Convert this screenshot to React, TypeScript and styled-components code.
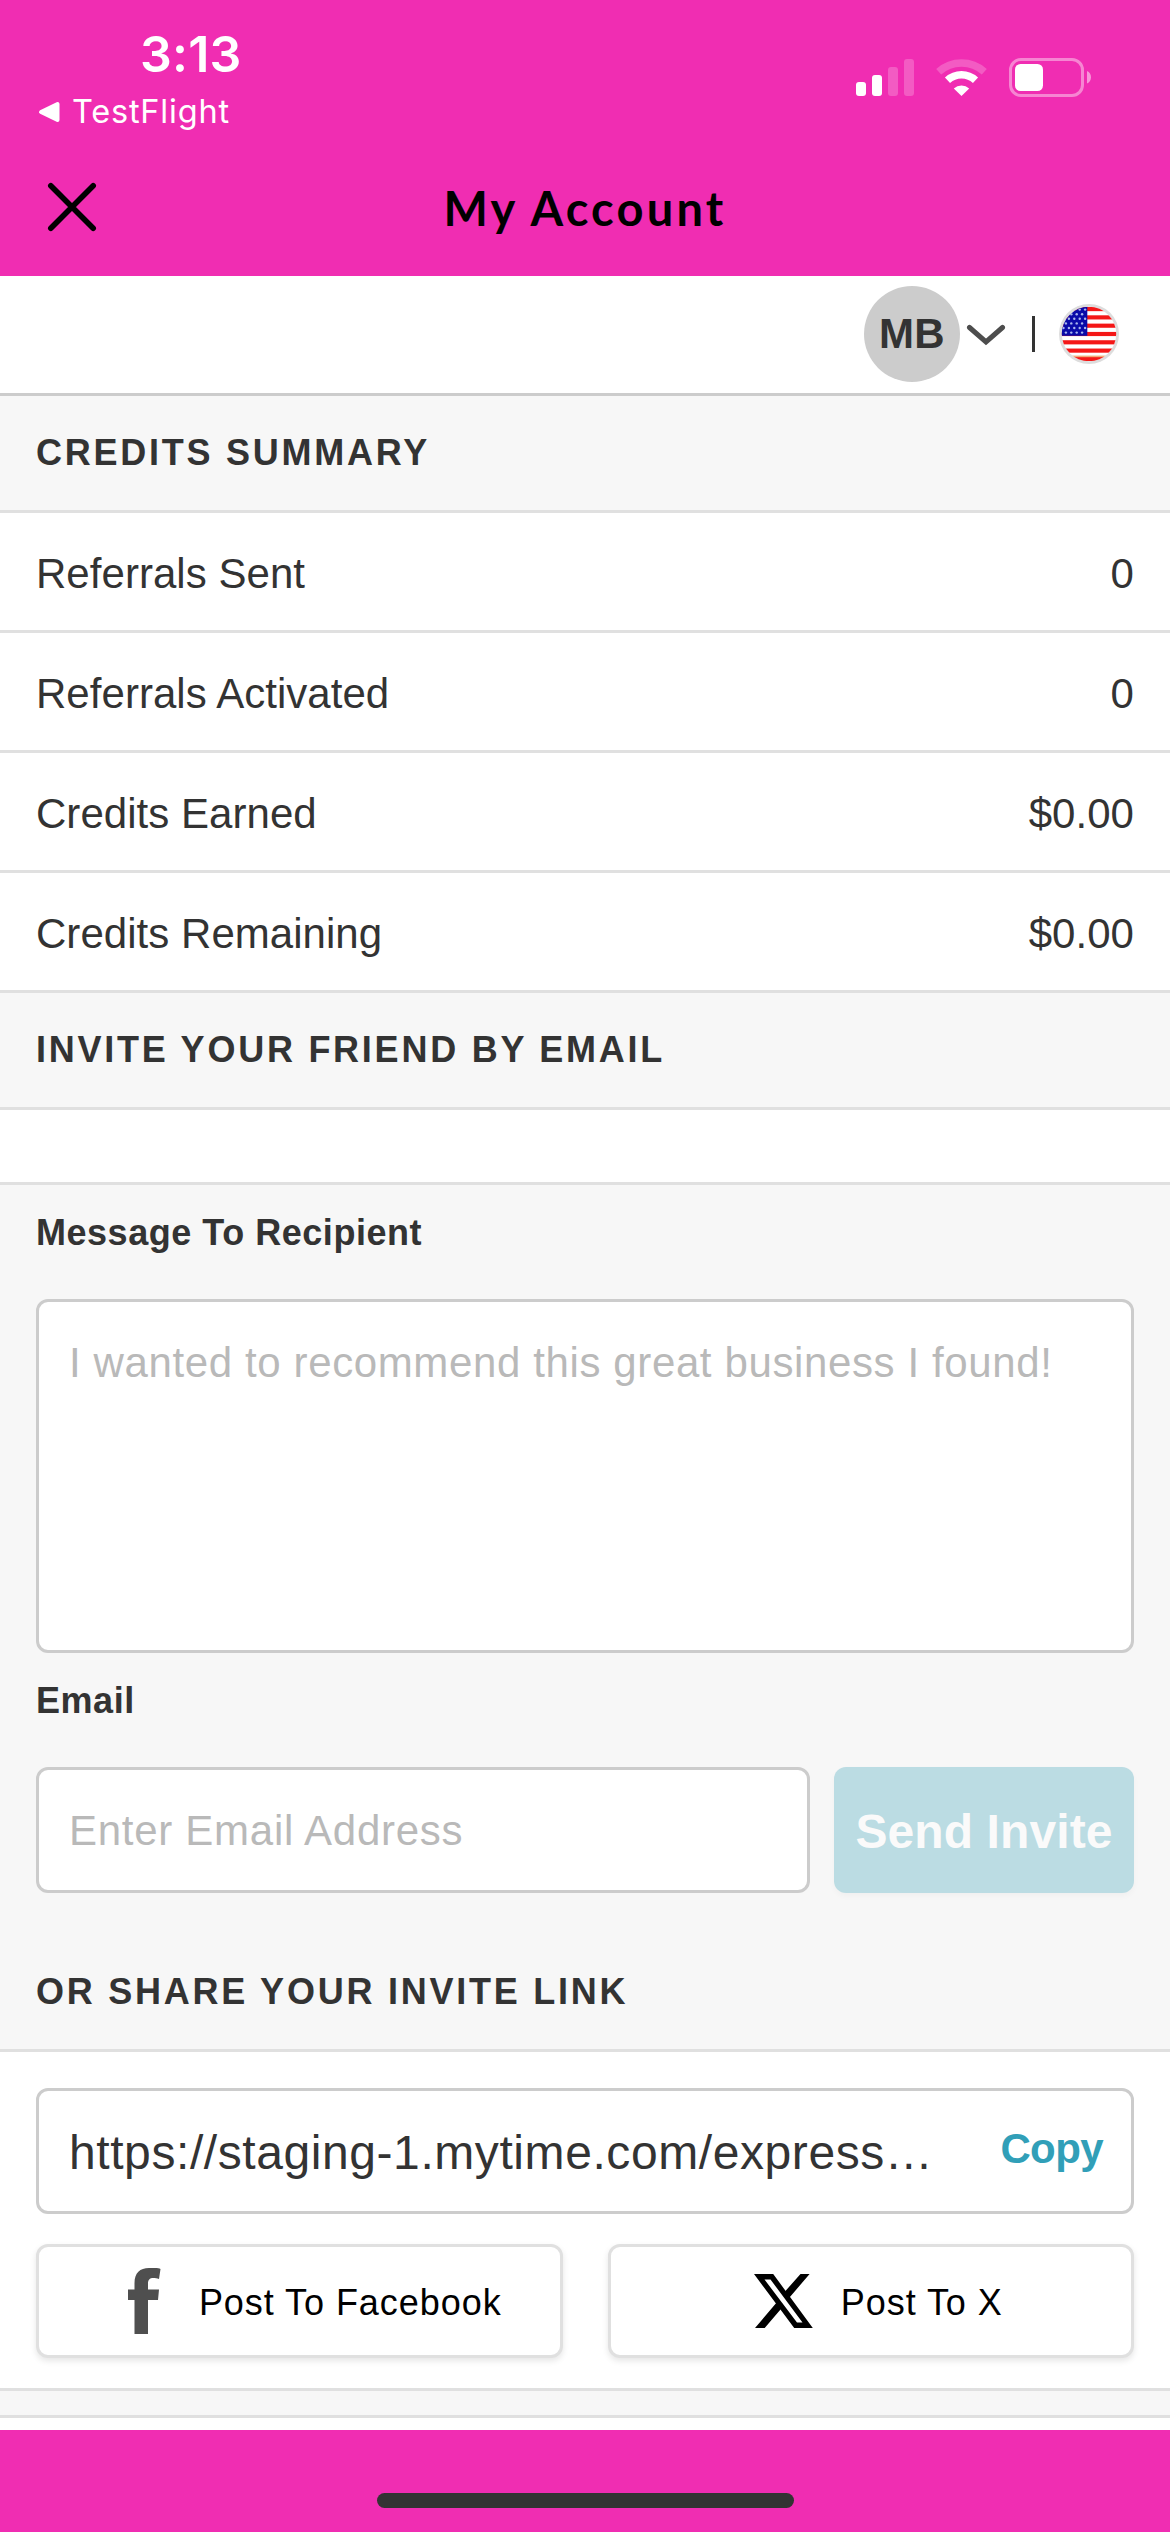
import React from "react";
import styled, { createGlobalStyle } from "styled-components";

const PINK = "#f02db2";
const INK = "#333333";
const LINE = "#e0e0e0";
const PANEL = "#f7f7f7";
const SANS = '"Liberation Sans", Arial, Helvetica, sans-serif';

const GlobalStyle = createGlobalStyle`
  *, *::before, *::after { box-sizing: border-box; }
  body { margin: 0; background: #fff; }
  button, input, textarea { font-family: inherit; margin: 0; }
`;

const Screen = styled.div`
  width: 1170px;
  height: 2532px;
  display: flex;
  flex-direction: column;
  overflow: hidden;
  background: #fff;
  color: ${INK};
  font-family: ${SANS};
`;

const TopArea = styled.header`
  height: 276px;
  flex: none;
  display: flex;
  flex-direction: column;
  background: ${PINK};
`;

const StatusBar = styled.div`
  height: 138px;
  display: flex;
  justify-content: space-between;
  color: #fff;
  font-family: Inter, sans-serif;
`;

const StatusLeft = styled.div`
  display: flex;
  flex-direction: column;
  padding: 24px 0 0 38px;
`;

const Clock = styled.div`
  height: 60px;
  padding-left: 102px;
  font-size: 50px;
  font-weight: 600;
  line-height: 60px;
  letter-spacing: 0.2px;
`;

const BackLink = styled.div`
  display: flex;
  align-items: center;
  gap: 12px;
  height: 40px;
  margin-top: 8px;
  font-size: 32.5px;
  letter-spacing: 0.8px;
  line-height: 40px;
`;

const StatusIcons = styled.div`
  display: flex;
  align-items: flex-start;
  padding: 58px 79px 0 0;
`;

const SignalIcon = styled.svg`
  margin-right: 22px;
`;

const WifiIcon = styled.svg`
  margin-right: 22px;
`;

const TitleBar = styled.div`
  flex: 1;
  display: grid;
  grid-template-columns: 120px 1fr 120px;
  align-items: center;
`;

const CloseButton = styled.button`
  width: 60px;
  height: 60px;
  margin: 0 0 0 42px;
  padding: 0;
  border: 0;
  background: none;

  svg { display: block; }
`;

const Title = styled.h1`
  margin: 0;
  padding-top: 2px;
  text-align: center;
  color: #000;
  font-family: Lato, sans-serif;
  font-size: 47px;
  font-weight: 700;
  line-height: 60px;
  letter-spacing: 3.2px;
`;

const Toolbar = styled.div`
  height: 120px;
  flex: none;
  display: flex;
  align-items: center;
  justify-content: flex-end;
  padding: 0 51px 1px 0;
  border-bottom: 3px solid #cccccc;
`;

const Avatar = styled.div`
  width: 96px;
  height: 96px;
  display: flex;
  align-items: center;
  justify-content: center;
  border-radius: 50%;
  background: #cccccc;
  font-size: 42px;
  font-weight: 700;
  letter-spacing: 0.3px;
`;

const Chevron = styled.svg`
  margin: 3px 26px 0 6px;
`;

const Divider = styled.span`
  width: 3px;
  height: 36px;
  margin-right: 24px;
  background: ${INK};
`;

const SectionTitle = styled.h2`
  height: 117px;
  flex: none;
  margin: 0;
  padding: 0 36px;
  border-bottom: 3px solid ${LINE};
  background: ${PANEL};
  font-size: 36px;
  font-weight: 700;
  line-height: 114px;
  letter-spacing: 2.75px;
`;

const SummaryRow = styled.div`
  height: 120px;
  flex: none;
  display: flex;
  align-items: center;
  justify-content: space-between;
  padding: 4px 36px 0;
  border-bottom: 3px solid ${LINE};
  font-size: 42px;
  line-height: 54px;
  letter-spacing: 0.04px;
`;

const Spacer = styled.div`
  height: 75px;
  flex: none;
  border-bottom: 3px solid ${LINE};
`;

const InviteForm = styled.form`
  height: 750px;
  flex: none;
  padding: 0 36px;
  background: ${PANEL};
`;

const Label = styled.label`
  display: block;
  height: 114px;
  font-size: 36px;
  font-weight: 700;
  line-height: 96px;
  letter-spacing: 0.53px;
`;

const MessageBox = styled.textarea`
  display: block;
  width: 100%;
  height: 354px;
  padding: 37px 30px;
  border: 3px solid #cccccc;
  border-radius: 12px;
  background: #fff;
  resize: none;
  overflow: hidden;
  font-size: 42px;
  line-height: 48px;
  letter-spacing: 0.62px;

  &::placeholder { color: #b9b9b9; opacity: 1; }
`;

const EmailRow = styled.div`
  display: grid;
  grid-template-columns: 1fr 300px;
  gap: 24px;
  height: 126px;
`;

const EmailInput = styled.input`
  width: 100%;
  height: 126px;
  padding: 2px 30px 0;
  border: 3px solid #cccccc;
  border-radius: 12px;
  background: #fff;
  font-size: 42px;
  letter-spacing: 0.72px;

  &::placeholder { color: #b9b9b9; opacity: 1; }
`;

const SendButton = styled.button`
  height: 126px;
  padding: 2px 0 0;
  border: 0;
  border-radius: 12px;
  background: #bbdce3;
  box-shadow: 0 3px 6px rgba(0, 0, 0, 0.03);
  color: #fafafa;
  font-size: 48px;
  font-weight: 700;
  letter-spacing: 0.1px;
  white-space: nowrap;
`;

const SharePanel = styled.section`
  height: 339px;
  flex: none;
  display: flex;
  flex-direction: column;
  gap: 30px;
  padding: 36px 36px 0;
  border-bottom: 3px solid ${LINE};
`;

const LinkBox = styled.div`
  height: 126px;
  display: flex;
  align-items: center;
  justify-content: space-between;
  padding: 0 28px 0 30px;
  border: 3px solid #cccccc;
  border-radius: 12px;
`;

const LinkText = styled.span`
  padding-top: 3px;
  font-size: 48px;
  line-height: 60px;
  letter-spacing: 0.58px;
  white-space: nowrap;
`;

const CopyButton = styled.button`
  padding: 0 0 5px;
  border: 0;
  background: none;
  color: #319fb8;
  font-size: 42px;
  font-weight: 700;
  line-height: 54px;
  letter-spacing: -0.6px;
`;

const ShareButtons = styled.div`
  display: grid;
  grid-template-columns: 1fr 1fr;
  gap: 45px;
`;

const ShareButton = styled.button<{ $gap: number; $shift: number }>`
  height: 114px;
  display: flex;
  align-items: center;
  justify-content: center;
  gap: ${(p) => p.$gap}px;
  padding: 0 0 0 ${(p) => p.$shift}px;
  border: 3px solid ${LINE};
  border-radius: 12px;
  background: #fff;
  box-shadow: 0 3px 6px rgba(0, 0, 0, 0.1);
  color: #000;
  font-size: 36px;
  line-height: 42px;
  letter-spacing: 0.95px;

  span { padding-top: 3px; }
`;

const NextSection = styled.div`
  height: 27px;
  flex: none;
  border-bottom: 3px solid ${LINE};
  background: ${PANEL};
`;

const BottomBar = styled.footer`
  height: 102px;
  flex: none;
  display: flex;
  justify-content: center;
  align-items: flex-end;
  margin-top: auto;
  padding-bottom: 24px;
  background: ${PINK};
`;

const HomeIndicator = styled.div`
  width: 417px;
  height: 15px;
  border-radius: 8px;
  background: ${INK};
`;

function Flag() {
  const stripe = 54 / 13;
  const stars: [number, number][] = [];
  for (let r = 0; r < 6; r++) {
    for (let c = 0; c < 5; c++) {
      stars.push([4.5 + c * 5.4 + (r % 2) * 2.4, 5.6 + r * 4.6]);
    }
  }
  return (
    <svg width="60" height="60" viewBox="0 0 60 60">
      <defs>
        <clipPath id="flag-disc">
          <circle cx="30" cy="30" r="27.2" />
        </clipPath>
      </defs>
      <circle cx="30" cy="30" r="30" fill="#dddddd" />
      <g clipPath="url(#flag-disc)">
        <rect width="60" height="60" fill="#fff" />
        {[0, 2, 4, 6, 8, 10, 12].map((i) => (
          <rect key={i} y={3 + i * stripe} width="60" height={stripe} fill="#f41717" />
        ))}
        <rect y="51.6" width="60" height="1.6" fill="#f3a878" />
        <rect width="28.3" height="31.8" fill="#0a0aa8" />
        {stars.map(([x, y], i) =>
          x < 27 ? <circle key={i} cx={x} cy={y} r="1.2" fill="#a9b6ee" /> : null
        )}
      </g>
    </svg>
  );
}

const summary = [
  { label: "Referrals Sent", value: "0" },
  { label: "Referrals Activated", value: "0" },
  { label: "Credits Earned", value: "$0.00" },
  { label: "Credits Remaining", value: "$0.00" },
];

export default function App() {
  return (
    <Screen>
      <GlobalStyle />
      <TopArea>
        <StatusBar>
          <StatusLeft>
            <Clock>3:13</Clock>
            <BackLink>
              <svg width="22" height="22" viewBox="0 0 22 22">
                <path d="M3 11 19.5 3V19Z" fill="#fff" stroke="#fff" strokeWidth="4" strokeLinejoin="round" />
              </svg>
              <span>TestFlight</span>
            </BackLink>
          </StatusLeft>
          <StatusIcons>
            <SignalIcon width="58" height="40" viewBox="0 0 58 40" fill="#fff">
              <rect x="0" y="24" width="10" height="14" rx="3" />
              <rect x="16" y="17" width="10" height="21" rx="3" />
              <rect x="32" y="9" width="10" height="29" rx="3" opacity="0.22" />
              <rect x="48" y="1" width="10" height="37" rx="3" opacity="0.22" />
            </SignalIcon>
            <WifiIcon width="51" height="40" viewBox="0 0 51 40" fill="none" stroke="#fff">
              <path d="M2.7 13.7A34 34 0 0 1 48.3 13.7" strokeWidth="7.5" opacity="0.22" />
              <path d="M11.5 22.3A20.5 20.5 0 0 1 39.5 22.3" strokeWidth="7.5" />
              <path d="M17.8 30.4A11.5 11.5 0 0 1 33.2 30.4L25.5 38Z" fill="#fff" stroke="none" />
            </WifiIcon>
            <svg width="82" height="40" viewBox="0 0 82 40">
              <rect x="1.5" y="1.5" width="72" height="36" rx="10.5" fill="none" stroke="#fff" strokeWidth="3" opacity="0.42" />
              <rect x="6" y="6" width="28" height="27" rx="5.5" fill="#fff" />
              <path d="M78 13C83.3 15 83.3 23.5 78 25.5Z" fill="#fff" opacity="0.5" />
            </svg>
          </StatusIcons>
        </StatusBar>
        <TitleBar>
          <CloseButton type="button" aria-label="Close">
            <svg width="60" height="60" viewBox="0 0 60 60" stroke="#000" strokeWidth="5.6" strokeLinecap="round">
              <path d="M8.8 8.8 51.2 51.2M51.2 8.8 8.8 51.2" />
            </svg>
          </CloseButton>
          <Title>My Account</Title>
        </TitleBar>
      </TopArea>

      <Toolbar>
        <Avatar>MB</Avatar>
        <Chevron width="40" height="24" viewBox="0 0 40 24" fill="none" stroke="#4d4d4d" strokeWidth="5">
          <path d="M3.5 3.5 20 18 36.5 3.5" strokeLinecap="round" />
        </Chevron>
        <Divider />
        <Flag />
      </Toolbar>

      <SectionTitle>CREDITS SUMMARY</SectionTitle>
      {summary.map((row) => (
        <SummaryRow key={row.label}>
          <span>{row.label}</span>
          <span>{row.value}</span>
        </SummaryRow>
      ))}

      <SectionTitle>INVITE YOUR FRIEND BY EMAIL</SectionTitle>
      <Spacer />
      <InviteForm>
        <Label htmlFor="message">Message To Recipient</Label>
        <MessageBox id="message" placeholder="I wanted to recommend this great business I found!" />
        <Label htmlFor="email">Email</Label>
        <EmailRow>
          <EmailInput id="email" placeholder="Enter Email Address" />
          <SendButton type="button">Send Invite</SendButton>
        </EmailRow>
      </InviteForm>

      <SectionTitle>OR SHARE YOUR INVITE LINK</SectionTitle>
      <SharePanel>
        <LinkBox>
          <LinkText>https://staging-1.mytime.com/express…</LinkText>
          <CopyButton type="button">Copy</CopyButton>
        </LinkBox>
        <ShareButtons>
          <ShareButton type="button" $gap={38} $shift={31}>
            <svg width="33" height="66" viewBox="0 0 33 66" fill="#4f4f4f">
              <path d="M6.5 66V32H0V21.5H6.5V15C6.5 5 12 0 21 0H27C29.500 0 31.500 .4 32.500 1L31 11C29 10.300 27 10 25.500 10C21.500 10 20 12 20 15.500V21.500H31L30 32H20V66Z" />
            </svg>
            <span>Post To Facebook</span>
          </ShareButton>
          <ShareButton type="button" $gap={28} $shift={15}>
            <svg width="59" height="54" viewBox="0 0 59 54" fill="#000">
              <path fillRule="evenodd" d="M0 0H19.200L58.800 54H40.200ZM10.500 5.500 43 48.500H48.500L16.500 5.500Z" />
              <path d="M46.500 0H55.600L35.500 23.500 31 17.500ZM1 54H10.700L28 33.800 23.500 27.600Z" />
            </svg>
            <span>Post To X</span>
          </ShareButton>
        </ShareButtons>
      </SharePanel>
      <NextSection />

      <BottomBar>
        <HomeIndicator />
      </BottomBar>
    </Screen>
  );
}
